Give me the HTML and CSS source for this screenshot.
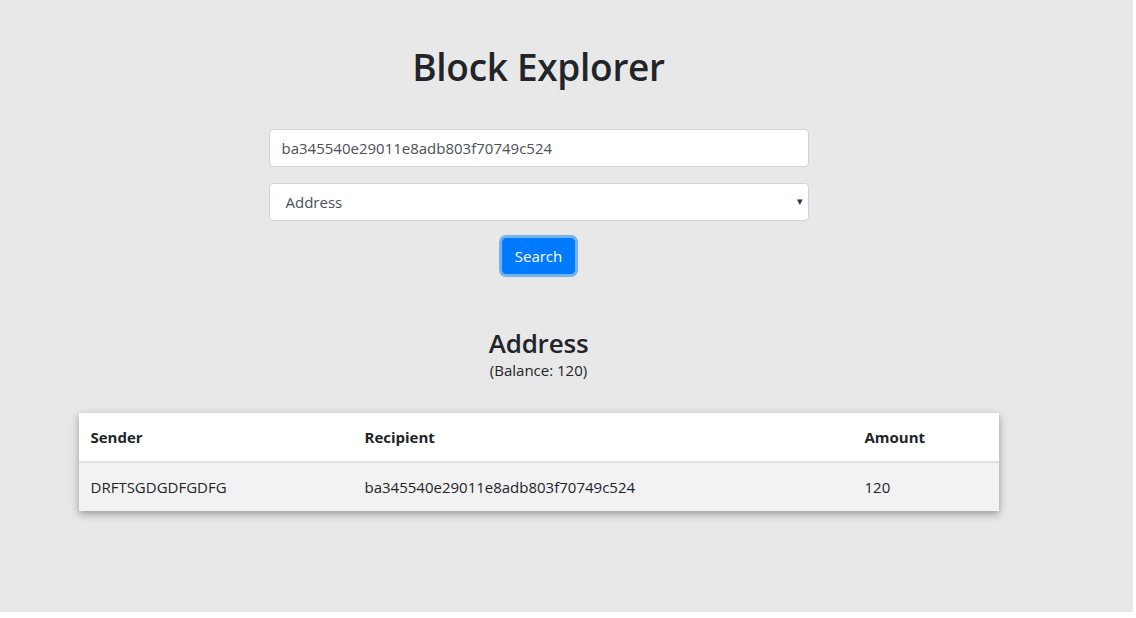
FILE: index.html
```html
<!DOCTYPE html>
<html>
<head>
<meta charset="utf-8">
<link rel="stylesheet" href="styles.css">
</head>
<body>
<div class="page">
  <div class="content">
    <h1 class="title">Block Explorer</h1>
    <form class="search-form">
      <input class="field" type="text" value="ba345540e29011e8adb803f70749c524">
      <div class="select-wrap">
        <div class="field select">Address</div>
        <span class="caret">&#9662;</span>
      </div>
      <button class="btn" type="button">Search</button>
    </form>
    <h3 class="result-title">Address</h3>
    <p class="balance">(Balance: 120)</p>
    <table class="tx-table">
      <thead>
        <tr><th class="c-sender">Sender</th><th class="c-recipient">Recipient</th><th class="c-amount">Amount</th></tr>
      </thead>
      <tbody>
        <tr><td>DRFTSGDGDFGDFG</td><td>ba345540e29011e8adb803f70749c524</td><td>120</td></tr>
      </tbody>
    </table>
  </div>
</div>
</body>
</html>
```
FILE: styles.css
```css
* { box-sizing: border-box; }
html, body { margin: 0; padding: 0; background: #ffffff; }
body {
  font-family: "Open Sans", "Noto Sans", sans-serif;
  color: #212529;
  font-size: 16px;
  line-height: 1.5;
}
.page {
  width: 1133px;
  height: 612px;
  background: #e8e8e8;
  overflow: hidden;
}
.content {
  width: 1077px;
  display: flex;
  flex-direction: column;
  align-items: center;
  padding-top: 43px;
}
.title {
  margin: 0;
  font-size: 37px;
  font-weight: 600;
  line-height: 48px;
  letter-spacing: -0.3px;
}
.search-form {
  margin-top: 38px;
  width: 540px;
  display: flex;
  flex-direction: column;
  align-items: center;
}
.field {
  width: 540px;
  height: 38px;
  padding: 0 12px;
  border: 1px solid #ced4da;
  border-radius: 4px;
  background: #fff;
  color: #495057;
  font-family: inherit;
  font-size: 15px;
  line-height: 36px;
  outline: none;
}
.select-wrap {
  position: relative;
  margin-top: 16px;
}
.select { padding-left: 16px; }
.caret {
  position: absolute;
  right: 6px;
  top: 10px;
  font-size: 11px;
  line-height: 16px;
  color: #333;
}
.btn {
  margin-top: 17px;
  height: 36px;
  padding: 0 12px;
  border: 1px solid #007bff;
  border-radius: 4px;
  background: #007bff;
  color: #fff;
  font-family: inherit;
  font-size: 15px;
  line-height: 34px;
  box-shadow: 0 0 0 3px rgba(0, 123, 255, 0.5);
}
.result-title {
  margin: 52px 0 0;
  font-size: 26px;
  font-weight: 600;
  line-height: 34px;
  letter-spacing: -0.2px;
}
.balance {
  margin: 0;
  font-size: 15px;
  line-height: 21px;
}
.tx-table {
  margin-top: 32px;
  width: 920px;
  border-collapse: collapse;
  background: #fff;
  box-shadow: 0 3px 8px rgba(0, 0, 0, 0.35);
  font-size: 15px;
}
.tx-table th, .tx-table td {
  text-align: left;
  padding: 12px 12px;
  line-height: 24px;
}
.tx-table th {
  font-weight: 700;
  border-bottom: 2px solid #dee2e6;
}
.tx-table tbody tr { background: #f2f2f2; }
.c-sender { width: 274px; }
.c-recipient { width: 500px; }
```
